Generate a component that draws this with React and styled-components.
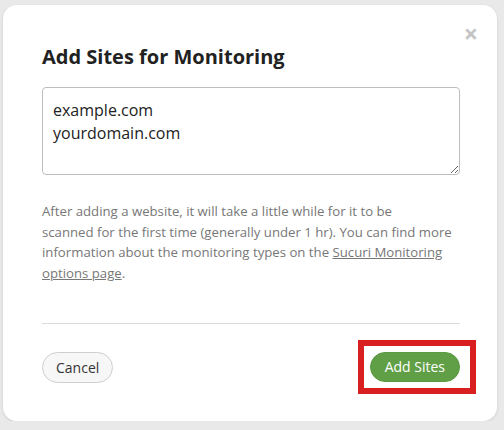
import React from "react";
import styled, { createGlobalStyle } from "styled-components";

const GlobalStyle = createGlobalStyle`
  html, body {
    margin: 0;
    padding: 0;
    background: #e9e9e9;
    font-family: "Open Sans", "Liberation Sans", sans-serif;
  }
`;

const Page = styled.div`
  padding: 5px 7px 0 3px;
`;

const Modal = styled.div`
  position: relative;
  width: 494px;
  box-sizing: border-box;
  background: #fff;
  border-radius: 14px;
  box-shadow: 0 1px 3px rgba(0, 0, 0, 0.12);
  padding: 40px 37px 38px 39px;
`;

const Close = styled.button`
  position: absolute;
  top: 16px;
  right: 19px;
  border: 0;
  background: none;
  padding: 0;
  font-family: "Open Sans", "Liberation Sans", sans-serif;
  font-size: 25px;
  font-weight: 700;
  line-height: 1;
  color: #c4c4c4;
  cursor: pointer;
`;

const Title = styled.h3`
  margin: 0 0 18px;
  font-size: 20px;
  line-height: 24px;
  font-weight: 700;
  color: #222;
`;

const Sites = styled.textarea`
  display: block;
  width: 418px;
  height: 88px;
  box-sizing: border-box;
  margin: 0;
  padding: 11px 10px;
  border: 1px solid #bdbdbd;
  border-radius: 4px;
  font-family: "Open Sans", "Liberation Sans", sans-serif;
  font-size: 16px;
  line-height: 23px;
  color: #222;
  resize: vertical;
  outline: none;
`;

const Note = styled.p`
  margin: 26px 0 0;
  font-size: 13.2px;
  line-height: 20.5px;
  color: #777;

  a {
    color: #777;
    text-decoration: underline;
  }
`;

const Divider = styled.hr`
  margin: 40px 0 0;
  width: 418px;
  border: 0;
  border-top: 1px solid #dcdcdc;
`;

const Footer = styled.div`
  display: flex;
  justify-content: space-between;
  align-items: center;
  width: 418px;
  margin-top: 28px;
`;

const Pill = styled.button`
  height: ${(p) => (p.$primary ? "30px" : "31px")};
  padding: 0 ${(p) => (p.$primary ? "14px" : "13px")};
  border-radius: 16px;
  border: 1px solid ${(p) => (p.$primary ? "#5a9a41" : "#cfcfcf")};
  background: ${(p) => (p.$primary ? "#609f46" : "#f7f7f7")};
  color: ${(p) => (p.$primary ? "#fff" : "#333")};
  font-family: "Open Sans", "Liberation Sans", sans-serif;
  font-size: 14px;
  line-height: 1;
  cursor: pointer;
`;

const Highlight = styled.div`
  position: relative;
  margin-top: -1px;

  &::after {
    content: "";
    position: absolute;
    top: -12px;
    bottom: -12px;
    left: -12px;
    right: -16px;
    border: 6px solid #d92020;
    pointer-events: none;
  }
`;

export default function App() {
  return (
    <Page>
      <GlobalStyle />
      <Modal>
        <Close aria-label="Close">×</Close>
        <Title>Add Sites for Monitoring</Title>
        <Sites defaultValue={"example.com\nyourdomain.com"} />
        <Note>
          After adding a website, it will take a little while for it to be
          <br />
          scanned for the first time (generally under 1 hr). You can find more
          information about the monitoring types on the{" "}
          <a href="#options">Sucuri Monitoring options page</a>.
        </Note>
        <Divider />
        <Footer>
          <Pill>Cancel</Pill>
          <Highlight>
            <Pill $primary>Add Sites</Pill>
          </Highlight>
        </Footer>
      </Modal>
    </Page>
  );
}
